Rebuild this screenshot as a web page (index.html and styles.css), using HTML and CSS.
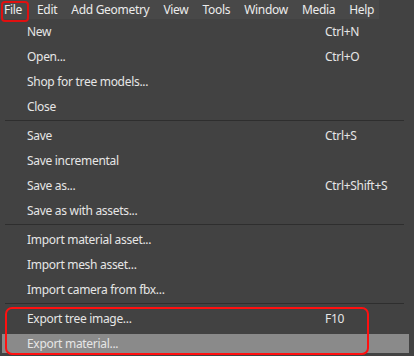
FILE: index.html
```html
<!DOCTYPE html>
<html>
<head>
<meta charset="utf-8">
<link rel="stylesheet" href="styles.css">
</head>
<body>
<div class="app">
  <div class="menubar">
    <div class="mb-item mb-file">File</div>
    <div class="mb-item">Edit</div>
    <div class="mb-item">Add Geometry</div>
    <div class="mb-item">View</div>
    <div class="mb-item">Tools</div>
    <div class="mb-item">Window</div>
    <div class="mb-item">Media</div>
    <div class="mb-item">Help</div>
  </div>
  <div class="dropdown">
    <div class="row"><span class="label">New</span><span class="key">Ctrl+N</span></div>
    <div class="row"><span class="label">Open...</span><span class="key">Ctrl+O</span></div>
    <div class="row"><span class="label">Shop for tree models...</span></div>
    <div class="row"><span class="label">Close</span></div>
    <div class="sep"></div>
    <div class="row"><span class="label">Save</span><span class="key">Ctrl+S</span></div>
    <div class="row"><span class="label">Save incremental</span></div>
    <div class="row"><span class="label">Save as...</span><span class="key">Ctrl+Shift+S</span></div>
    <div class="row"><span class="label">Save as with assets...</span></div>
    <div class="sep"></div>
    <div class="row"><span class="label">Import material asset...</span></div>
    <div class="row"><span class="label">Import mesh asset...</span></div>
    <div class="row"><span class="label">Import camera from fbx...</span></div>
    <div class="sep"></div>
    <div class="export-group">
      <div class="row"><span class="label">Export tree image...</span><span class="key">F10</span></div>
      <div class="row row-hover"><span class="label">Export material...</span></div>
      <div class="red-box"></div>
    </div>
  </div>
</div>
</body>
</html>
```

FILE: styles.css
```css
* { box-sizing: border-box; }
html, body {
  margin: 0;
  padding: 0;
  background: #424242;
}
body {
  width: 414px;
  height: 356px;
  overflow: hidden;
  font-family: "Noto Sans", "Open Sans", sans-serif;
  font-size: 12px;
  color: #e6e6e6;
}
.app {
  display: flex;
  flex-direction: column;
}
.menubar {
  display: flex;
  align-items: center;
  width: 379px;
  height: 19px;
  background: #484848;
}
.mb-item {
  padding: 0 7px;
  line-height: 19px;
  font-size: 12px;
  letter-spacing: -0.3px;
  color: #ececec;
  white-space: nowrap;
}
.mb-file {
  position: relative;
  padding-left: 4px;
  padding-right: 8px;
}
.mb-file::after {
  content: "";
  position: absolute;
  left: 1px;
  top: 1px;
  width: 24px;
  height: 17px;
  border: 2px solid #e01010;
  border-radius: 4px;
}
.dropdown {
  display: flex;
  flex-direction: column;
  padding: 0 5px 0 2px;
}
.row {
  display: flex;
  align-items: center;
  height: 25px;
  padding-left: 25px;
  font-size: 12px;
  letter-spacing: -0.3px;
  white-space: nowrap;
}
.label {
  width: 298px;
}
.key {
  color: #e6e6e6;
}
.sep {
  height: 1px;
  background: #2e2e2e;
  margin: 1px 5px 2px 3px;
}
.export-group {
  position: relative;
}
.row-hover {
  background: #8a8a8a;
  height: 19px;
  margin-top: 3px;
}
.red-box {
  position: absolute;
  left: 3px;
  top: 1px;
  width: 364px;
  height: 48px;
  border: 2px solid #ff1010;
  border-radius: 7px;
}
```
